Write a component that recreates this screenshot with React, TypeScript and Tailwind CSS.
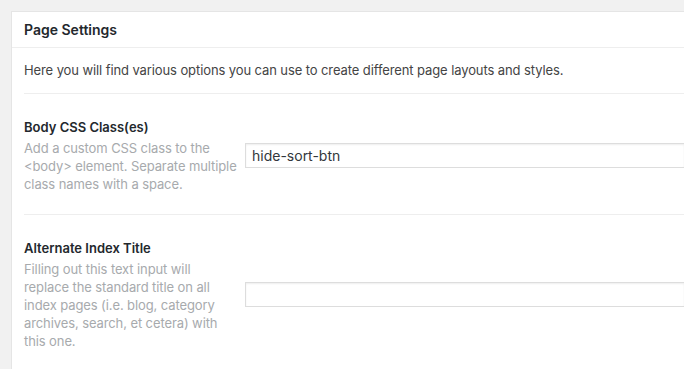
import React from "react";

function Field({
  label,
  lines,
  value,
}: {
  label: string;
  lines: string[];
  value: string;
}) {
  return (
    <div className="flex border-b border-[#eeeeee] pt-[10px] pb-[21px]">
      <div className="w-[216px] shrink-0">
        <div className="text-[13px] font-semibold leading-[18px] text-[#23282d]">{label}</div>
        <p className="mt-[3px] text-[13px] leading-[18px] tracking-[-0.1px] text-[#a7aaad] whitespace-nowrap">
          {lines.map((l, i) => (
            <span key={i} className="block">
              {l}
            </span>
          ))}
        </p>
      </div>
      <div className="flex-1 pl-[5px] flex items-center">
        <div className="w-full h-[25px] border border-[#dddddd] border-r-0 bg-white shadow-[inset_0_1px_2px_rgba(0,0,0,0.07)] px-[6px] flex items-center text-[14px] text-[#32373c]">
          {value}
        </div>
      </div>
    </div>
  );
}

export default function App() {
  return (
    <div
      className="w-[684px] h-[369px] overflow-hidden bg-[#f1f1f1] pt-[11px] pl-[11px]"
      style={{ fontFamily: "Inter, 'Noto Sans', sans-serif" }}
    >
      <div className="bg-white border-l border-t border-[#e5e5e5] h-[400px]">
        <div className="h-[36px] border-b border-[#eeeeee] px-[12px] flex items-center">
          <h2 className="text-[14px] font-semibold text-[#23282d]">Page Settings</h2>
        </div>
        <div className="pl-[12px]">
          <div className="border-b border-[#eeeeee] h-[46px] flex items-center">
            <p className="text-[13px] tracking-[-0.1px] text-[#444444]">
              Here you will find various options you can use to create different page layouts and styles.
            </p>
          </div>
          <div className="pt-[14px]">
            <Field
              label="Body CSS Class(es)"
              lines={[
                "Add a custom CSS class to the",
                "<body> element. Separate multiple",
                "class names with a space.",
              ]}
              value="hide-sort-btn"
            />
          </div>
          <div className="pt-[14px]">
            <Field
              label="Alternate Index Title"
              lines={[
                "Filling out this text input will",
                "replace the standard title on all",
                "index pages (i.e. blog, category",
                "archives, search, et cetera) with",
                "this one.",
              ]}
              value=""
            />
          </div>
        </div>
      </div>
    </div>
  );
}
